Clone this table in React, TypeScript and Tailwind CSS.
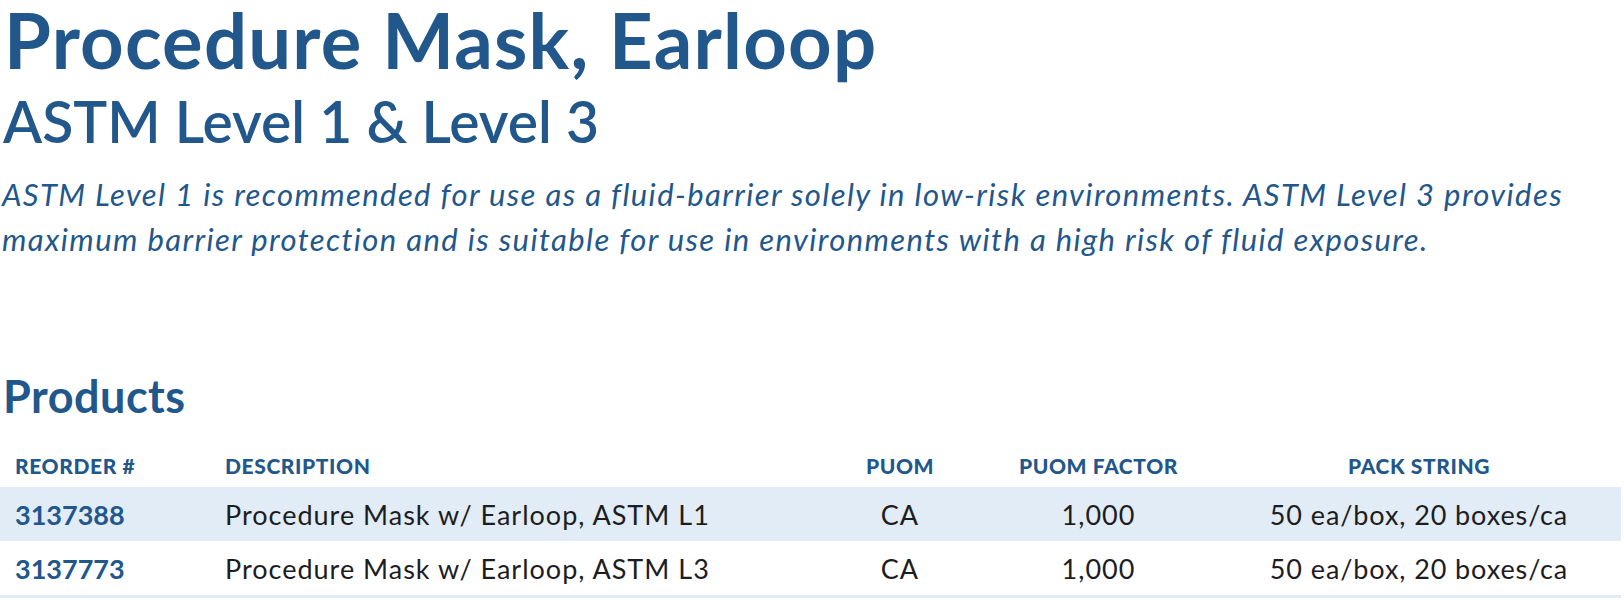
import React from "react";

const rows = [
  { id: "3137388", desc: "Procedure Mask w/ Earloop, ASTM L1", puom: "CA", factor: "1,000", pack: "50 ea/box, 20 boxes/ca", shaded: true },
  { id: "3137773", desc: "Procedure Mask w/ Earloop, ASTM L3", puom: "CA", factor: "1,000", pack: "50 ea/box, 20 boxes/ca", shaded: false },
];

const grid = "grid grid-cols-[210px_610px_160px_237px_404px]";

export default function App() {
  return (
    <div className="w-[1624px] h-[600px] overflow-hidden bg-white text-[#22578b] font-['Lato','Liberation_Sans',sans-serif]">
      <h1 className="pl-[4px] text-[76px] leading-[80px] font-bold tracking-[1.2px] whitespace-nowrap">Procedure Mask, Earloop</h1>
      <h2 className="mt-[13px] pl-[3px] text-[57px] leading-[57px] font-semibold">ASTM Level 1 &amp; Level 3</h2>
      <p className="mt-[22px] pl-[2px] text-[31px] leading-[45px] italic tracking-[1.4px] whitespace-nowrap">
        ASTM Level 1 is recommended for use as a fluid-barrier solely in low-risk environments. ASTM Level 3 provides
        <br />
        maximum barrier protection and is suitable for use in environments with a high risk of fluid exposure.
      </p>
      <h3 className="mt-[112px] pl-[3px] text-[45px] leading-[45px] font-bold tracking-[0.5px]">Products</h3>
      <div className="mt-[25px] w-[1621px]">
        <div className={`${grid} h-[43px] items-center text-[21px] leading-[21px] font-black uppercase tracking-[0.6px]`}>
          <div className="pl-[15px]">Reorder #</div>
          <div className="pl-[15px]">Description</div>
          <div className="text-center">PUOM</div>
          <div className="text-center">PUOM Factor</div>
          <div className="text-center">Pack String</div>
        </div>
        {rows.map((r) => (
          <div
            key={r.id}
            className={`${grid} h-[54px] items-center text-[27px] leading-[27px] ${r.shaded ? "bg-[#e1ecf6]" : "bg-white border-b-[3px] border-[#e1ecf6] box-content"}`}
          >
            <div className="pl-[15px] font-bold text-[#22578b]">{r.id}</div>
            <div className="pl-[15px] text-[#1d1d1f] tracking-[1px]">{r.desc}</div>
            <div className="text-center text-[#1d1d1f] tracking-[1px]">{r.puom}</div>
            <div className="text-center text-[#1d1d1f] tracking-[1px]">{r.factor}</div>
            <div className="text-center text-[#1d1d1f] tracking-[0.9px]">{r.pack}</div>
          </div>
        ))}
      </div>
    </div>
  );
}
